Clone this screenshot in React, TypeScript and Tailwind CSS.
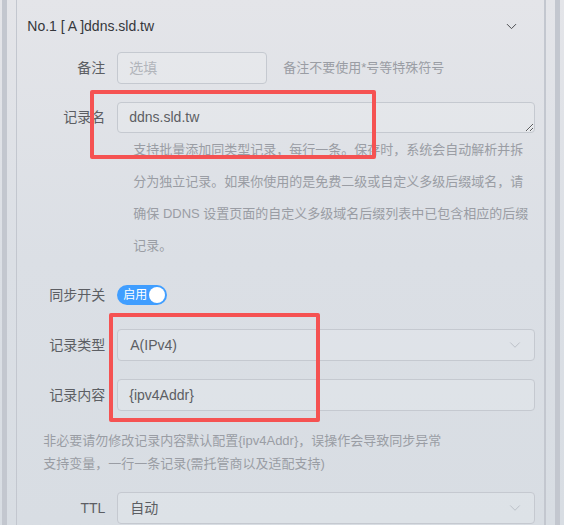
import { ChevronDown } from "lucide-react";

const labelCls =
  "w-[100px] shrink-0 pr-3 text-right text-[14px] text-[#5c5e63]";
const boxCls =
  "rounded-[4px] border border-[#c5c9d0] bg-white/15 text-[14px] text-[#5c5e63]";

function Row({ label, children, className = "" }: { label: string; children: React.ReactNode; className?: string }) {
  return (
    <div className={`flex items-center ${className}`}>
      <div className={labelCls}>{label}</div>
      {children}
    </div>
  );
}

function SelectBox({ value }: { value: string }) {
  return (
    <div className={`${boxCls} flex h-[32px] flex-1 items-center justify-between pl-[12px] pr-[10px]`}>
      <span>{value}</span>
      <ChevronDown size={18} strokeWidth={1.2} className="text-[#b8bcc4]" />
    </div>
  );
}

export default function App() {
  return (
    <div
      className="relative h-[525px] w-[564px] overflow-hidden bg-gradient-to-b from-[#e4e5e9] via-[#dbdfe5] to-[#d8dde3]"
      style={{ fontFamily: '"Liberation Sans", "Noto Sans CJK SC", sans-serif' }}
    >
      <div className="flex h-full">
        <div className="w-[2px]" />
        <div className="w-[5px] bg-[#c3c7cf]" />
        <div className="w-[9px]" />
        <div className="w-[1.5px] bg-[#c3c7cf]" />

        <div className="flex-1 pr-[9px]">
          {/* header */}
          <div className="flex h-[52px] items-center justify-between pl-[10px] pr-[15px] pt-[1px]">
            <span className="text-[14px] text-[#35373b]">No.1 [ A ]ddns.sld.tw</span>
            <ChevronDown size={17} strokeWidth={1.4} className="text-[#4a4c50]" />
          </div>

          <Row label="备注" className="h-[32px]">
            <div className={`${boxCls} flex h-[32px] w-[150px] items-center px-[11px] text-[#b2b5bb]`}>
              选填
            </div>
            <span className="ml-4 text-[13px] text-[#9a9da4]">备注不要使用*号等特殊符号</span>
          </Row>

          <Row label="记录名" className="mt-[18px]">
            <textarea
              readOnly
              rows={1}
              defaultValue="ddns.sld.tw"
              className={`${boxCls} block h-[31px] flex-1 resize-y px-[11px] py-[4px] leading-[21px] outline-none`}
            />
          </Row>

          <p className="ml-[116px] mt-[1px] w-[402px] text-[13px] leading-[32px] text-[#9a9da4]">
            支持批量添加同类型记录，每行一条。保存时，系统会自动解析并拆分为独立记录。如果你使用的是免费二级或自定义多级后缀域名，请确保 DDNS 设置页面的自定义多级域名后缀列表中已包含相应的后缀记录。
          </p>

          <Row label="同步开关" className="mt-[23px] h-[20px]">
            <div className="flex h-[20px] w-[50px] items-center justify-between rounded-full bg-[#409eff] pl-[6px] pr-[2px]">
              <span className="text-[12px] leading-none text-white">启用</span>
              <span className="h-[16px] w-[16px] rounded-full bg-white" />
            </div>
          </Row>

          <Row label="记录类型" className="mt-[24px]">
            <SelectBox value="A(IPv4)" />
          </Row>

          <Row label="记录内容" className="mt-[18px]">
            <div className={`${boxCls} flex h-[32px] flex-1 items-center px-[11px]`}>{"{ipv4Addr}"}</div>
          </Row>

          <div className="mt-[18px] pl-[26px] text-[13px] leading-[23px] text-[#9a9da4]">
            <div>非必要请勿修改记录内容默认配置{"{ipv4Addr}"}，误操作会导致同步异常</div>
            <div>支持变量，一行一条记录(需托管商以及适配支持)</div>
          </div>

          <Row label="TTL" className="mt-[17px]">
            <SelectBox value="自动" />
          </Row>
        </div>

        <div className="w-[2px] bg-[#c3c7cf]" />
        <div className="w-[9px]" />
        <div className="w-[5px] bg-[#c3c7cf]" />
        <div className="w-[4px]" />
      </div>

      {/* highlight boxes */}
      <div className="absolute left-[90px] top-[90px] h-[69px] w-[286px] rounded-[2px] border-4 border-[#f55252]" />
      <div className="absolute left-[109px] top-[313px] h-[109px] w-[211px] rounded-[2px] border-4 border-[#f55252]" />
    </div>
  );
}
